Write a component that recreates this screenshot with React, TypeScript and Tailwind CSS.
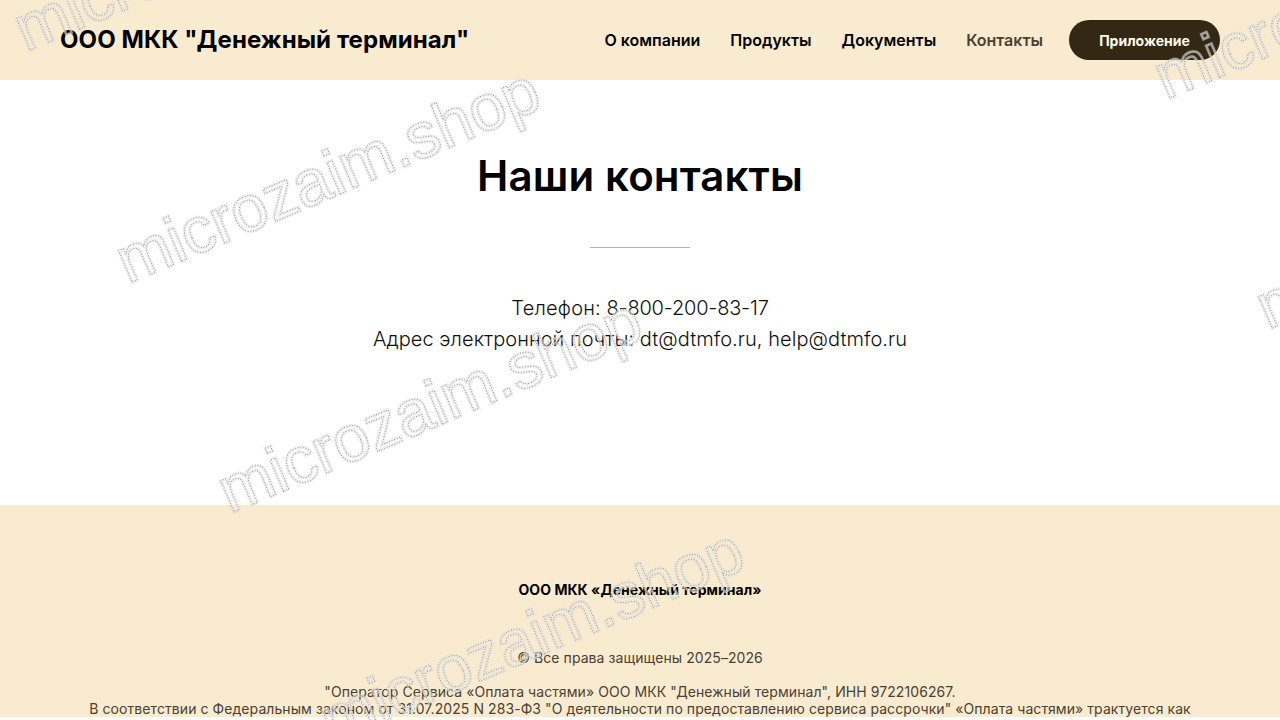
const navLinks = ["О компании", "Продукты", "Документы"];

// left end of each stamp, as it sits on the page
const stamps = [
  { x: 26, y: 52 },
  { x: 128, y: 284 },
  { x: 230, y: 514 },
  { x: 332, y: 744 },
  { x: 1166, y: 100 },
  { x: 1268, y: 330 },
];

function Stamp({ x, y }: { x: number; y: number }) {
  const shared = {
    x,
    y,
    transform: `rotate(-23 ${x} ${y})`,
    fontFamily: "'Liberation Sans', Arial, sans-serif",
    fontSize: 64.6,
  };
  return (
    <>
      <text {...shared} stroke="#c4c4c4" strokeOpacity={0.4} strokeWidth={3}>
        microzaim.shop
      </text>
      <text {...shared} stroke="#ffffff" strokeOpacity={0.45} strokeWidth={2}>
        microzaim.shop
      </text>
      <text {...shared} stroke="#8a8a8a" strokeWidth={0.8} strokeDasharray="1 1.7">
        microzaim.shop
      </text>
    </>
  );
}

function Watermark() {
  return (
    <svg
      className="pointer-events-none absolute inset-0 h-[720px] w-[1280px]"
      viewBox="0 0 1280 720"
      fill="none"
    >
      {stamps.map((stamp) => (
        <Stamp key={`${stamp.x}-${stamp.y}`} x={stamp.x} y={stamp.y} />
      ))}
    </svg>
  );
}

export default function App() {
  return (
    <div className="relative h-[720px] w-full overflow-hidden bg-white font-['Inter',sans-serif] text-black">
      <header className="flex h-20 items-center justify-between bg-[#f9ebd0] px-[60px]">
        <a className="text-[24px] font-bold leading-none tracking-[0.08px]">ООО МКК "Денежный терминал"</a>
        <nav className="flex items-center gap-[30px] text-[16px] font-semibold">
          {navLinks.map((link) => (
            <a key={link}>{link}</a>
          ))}
          <a className="text-[#4b4033]">Контакты</a>
          <a className="-ml-1 flex h-10 w-[151px] items-center justify-center rounded-[20px] bg-[#332814] text-[14px] font-bold text-[#fff8ea]">
            Приложение
          </a>
        </nav>
      </header>

      <main className="flex h-[425px] flex-col items-center pt-[69px]">
        <h1 className="text-[42px] font-semibold leading-[54px] tracking-[0.15px]">Наши контакты</h1>
        <div className="mt-[44px] h-px w-[100px] bg-[#b5b5b5]" />
        <div className="mt-[45px] text-center text-[20px] font-light leading-[31px] text-[#111]">
          <p>
            <span className="tracking-[0.2px]">Телефон:</span>{" "}
            <span className="tracking-[-0.2px]">8-800-200-83-17</span>
          </p>
          <p className="tracking-[0.05px]">Адрес электронной почты: dt@dtmfo.ru, help@dtmfo.ru</p>
        </div>
      </main>

      <footer className="flex flex-col items-center bg-[#f9ebd0] px-[60px] pt-[76px] text-center text-[14px] leading-[17px] text-[#4b4033]">
        <p className="font-bold tracking-[0.06px] text-black">ООО МКК «Денежный терминал»</p>
        <p className="mt-[51px] tracking-[0.07px]">© Все права защищены 2025–2026</p>
        <p className="mt-[17px] tracking-[0.075px]">
          "Оператор Сервиса «Оплата частями» ООО МКК "Денежный терминал", ИНН 9722106267.
          <br />
          В соответствии с Федеральным законом от 31.07.2025 N 283-ФЗ "О деятельности по предоставлению сервиса рассрочки" «Оплата частями» трактуется как
        </p>
      </footer>

      <Watermark />
    </div>
  );
}
